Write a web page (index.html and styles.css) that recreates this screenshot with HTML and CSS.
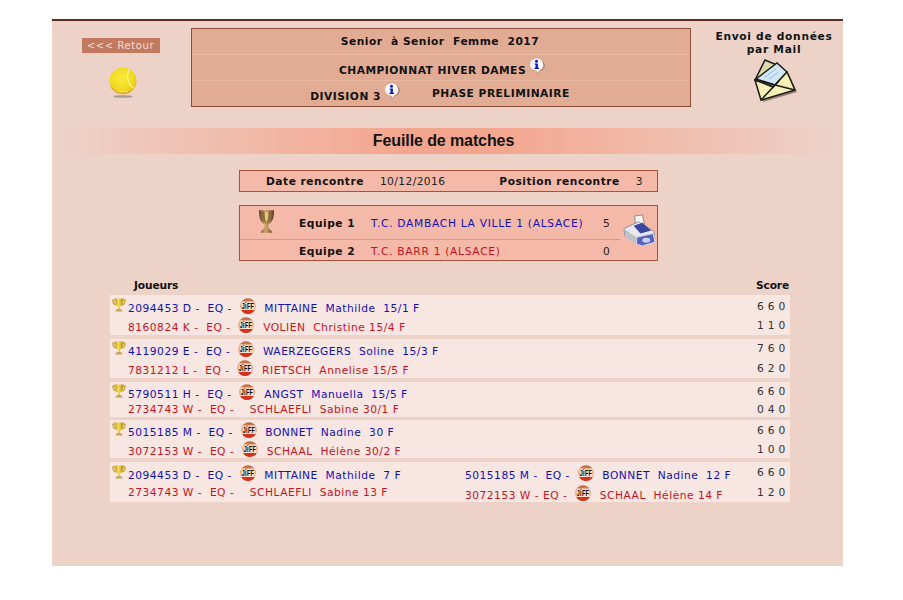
FILE: index.html
```html
<!DOCTYPE html>
<html lang="fr">
<head>
<meta charset="utf-8">
<title>Feuille de matches</title>
<link rel="stylesheet" href="styles.css">
</head>
<body>
<svg class="defs" aria-hidden="true">
  <defs>
    <linearGradient id="gOrange" x1="0" y1="0" x2="0" y2="1"><stop offset="0" stop-color="#b9663c"/><stop offset=".5" stop-color="#ee9d68"/><stop offset="1" stop-color="#f0a070"/></linearGradient>
    <radialGradient id="gBall" cx=".45" cy=".4" r=".65"><stop offset="0" stop-color="#fbe83c"/><stop offset=".7" stop-color="#f0d81c"/><stop offset="1" stop-color="#d2b424"/></radialGradient>
    <linearGradient id="gCup" x1="0" y1="0" x2="1" y2="0"><stop offset="0" stop-color="#5d4020"/><stop offset=".45" stop-color="#d0a868"/><stop offset="1" stop-color="#54391d"/></linearGradient>
    <linearGradient id="gTrophy" x1="0" y1="0" x2="1" y2="0"><stop offset="0" stop-color="#c0981c"/><stop offset=".45" stop-color="#f6dc5c"/><stop offset="1" stop-color="#a98412"/></linearGradient>
    <symbol id="jiff" viewBox="0 0 16 16">
      <circle cx="8" cy="8" r="7.800" fill="url(#gOrange)"/>
      <path d="M1.200 12h13.600A8 8 0 0 1 8 16a8 8 0 0 1-6.800-4z" fill="#d5301c"/>
      <rect x="1.500" y="3.500" width="13" height="8.500" fill="#fbeee0" opacity=".8"/>
      <text x="8" y="11.400" class="jiff-txt" text-anchor="middle" textLength="12.500" lengthAdjust="spacingAndGlyphs">JiFF</text>
    </symbol>
    <symbol id="trophy" viewBox="0 0 16 16">
      <path d="M3 2.500H1c0 3 1.500 5 4 5.500M13 2.500h2c0 3-1.500 5-4 5.500" fill="none" stroke="#c9a32c" stroke-width="1.500"/>
      <path d="M2.800 .5h10.400c0 5-1.500 8-4 9.200v2.800H6.800V9.700C4.300 8.500 2.800 5.500 2.800 .5z" fill="url(#gTrophy)"/>
      <path d="M4 15.500c0-2 1.800-3.300 4-3.300s4 1.300 4 3.300z" fill="#c2a85a"/>
    </symbol>
    <symbol id="info" viewBox="0 0 16 16">
      <path d="M9 1.500a6.500 6 0 0 1 1.500 11.500L8.300 16 7 13.500h3a6.500 6 0 0 0 4-2 6.500 6 0 0 0-5-10z" fill="#8d7d78"/>
      <path d="M7.500 .5a6.500 6 0 1 0 0 12l.9 2.800 2-3.400A6.500 6 0 0 0 7.500 .5z" fill="#fff"/>
      <circle cx="7.500" cy="3.200" r="1.500" fill="#1212c8"/>
      <path d="M5.600 5.400h3.300v4.400h1.100v1.300H5.400V9.800h1.100V6.600h-.9z" fill="#1212c8"/>
    </symbol>
  </defs>
</svg>
<main class="page">
  <header class="header">
    <div class="left">
      <a class="back">&lt;&lt;&lt; Retour</a>
      <svg class="ball" viewBox="0 0 30 34" aria-hidden="true">
        <ellipse cx="15" cy="30.500" rx="10" ry="1.300" fill="#a89a98"/>
        <circle cx="15" cy="15" r="13.500" fill="url(#gBall)"/>
        <path d="M21 3C18 11 20 19 26 22M7 24c4 2 9 3 13 1" fill="none" stroke="#fdf8c0" stroke-width="1"/>
        <path d="M3 21c5 6 13 8 20 4" fill="none" stroke="#e3ac36" stroke-width="1.500"/>
      </svg>
    </div>
    <div class="infobox">
      <div class="ib-row ib-one">Senior&#160; à Senior&#160; Femme&#160; 2017</div>
      <div class="ib-row ib-two"><span>CHAMPIONNAT HIVER DAMES</span><svg class="info"><use href="#info"/></svg></div>
      <div class="ib-row ib-three"><span class="division">DIVISION 3</span><svg class="info"><use href="#info"/></svg><span class="phase">PHASE PRELIMINAIRE</span></div>
    </div>
    <div class="right">
      <p class="mail">Envoi de données<br>par Mail</p>
      <svg class="envelope" viewBox="0 0 46 46" aria-hidden="true">
        <polygon points="5,23 11,43 45,33 37,15 15,3" fill="#4a3a32" opacity=".55"/>
        <polygon points="3,21 13,1 25,6 12,24" fill="#ddd8ae" stroke="#1c1c14" stroke-width="1.500"/>
        <polygon points="4,20 25,4 35,13 23,26" fill="#cfe6f6" stroke="#1c1c14" stroke-width="1.500"/>
        <path d="M13 18l11-8M17 20l10-7" stroke="#7fa3d8" stroke-width="1" stroke-dasharray="2 1"/>
        <polygon points="3,21 9,41 43,31 35,13 21,28" fill="#f8f2b8" stroke="#1c1c14" stroke-width="1.500"/>
        <path d="M3 21l40 10M9 41l18-19" fill="none" stroke="#1c1c14" stroke-width="1.500"/>
      </svg>
    </div>
  </header>

  <h1 class="title">Feuille de matches</h1>

  <section class="datebox">
    <b class="d-label">Date rencontre</b><span class="d-value">10/12/2016</span><b class="d-pos">Position rencontre</b><span class="d-num">3</span>
  </section>

  <section class="teams">
    <div class="t-rows">
      <div class="t-row t-first">
        <svg class="cup" viewBox="0 0 18 26" aria-hidden="true">
          <path d="M1 1h16c0 9-2 13-6 15v3c0 2 4 3 4 6H3c0-3 4-4 4-6v-3C3 14 1 10 1 1z" fill="url(#gCup)"/>
          <path d="M4 3h10c0 7-1.500 10-5 12C5.500 13 4 10 4 3z" fill="#8b6a3a"/>
          <path d="M7 3h4c0 6-.5 9-2 11-1.500-2-2-5-2-11z" fill="#e2c37c"/>
        </svg>
        <b class="t-label">Equipe 1</b><span class="t-name blue">T.C. DAMBACH LA VILLE 1 (ALSACE)</span><span class="t-score">5</span>
      </div>
      <div class="t-row t-second">
        <b class="t-label">Equipe 2</b><span class="t-name red">T.C. BARR 1 (ALSACE)</span><span class="t-score">0</span>
      </div>
    </div>
    <svg class="printer" viewBox="0 0 34 34" aria-hidden="true">
      <polygon points="12,2 20,1 22,10 13,12" fill="#f4f4f4" stroke="#8a8a90"/>
      <polygon points="1,15 16,8 32,18 32,25 15,25 2,23" fill="#e8e8ec" stroke="#8f8f98"/>
      <polygon points="11,12 20,9 29,17 18,20" fill="#3c46a0"/>
      <polygon points="2,16 14,24 14,31 2,24" fill="#bfc1c8"/>
      <polygon points="14,24 31,20 33,29 20,33 14,31" fill="#5a62c0" stroke="#d9dbe8"/>
      <ellipse cx="24" cy="27" rx="4" ry="2.500" fill="#c8d0f0"/>
    </svg>
  </section>

  <div class="heads"><b>Joueurs</b><b>Score</b></div>

  <section class="matches">
    <article class="match m-a">
      <div class="players">
        <div class="line blue"><svg class="trophy"><use href="#trophy"/></svg>2094453 D -&#160; EQ -&#160;&#160; <svg class="jiff"><use href="#jiff"/></svg>&#160; MITTAINE&#160; Mathilde&#160; 15/1 F</div>
        <div class="line red indent">8160824 K -&#160; EQ -&#160;&#160; <svg class="jiff"><use href="#jiff"/></svg>&#160; VOLIEN&#160; Christine 15/4 F</div>
      </div>
      <div class="score"><div class="s-line">6 6 0</div><div class="s-line">1 1 0</div></div>
    </article>
    <article class="match m-b">
      <div class="players">
        <div class="line blue"><svg class="trophy"><use href="#trophy"/></svg>4119029 E -&#160; EQ -&#160;&#160; <svg class="jiff"><use href="#jiff"/></svg>&#160; WAERZEGGERS&#160; Soline&#160; 15/3 F</div>
        <div class="line red indent">7831212 L -&#160; EQ -&#160;&#160; <svg class="jiff"><use href="#jiff"/></svg>&#160; RIETSCH&#160; Annelise 15/5 F</div>
      </div>
      <div class="score"><div class="s-line">7 6 0</div><div class="s-line">6 2 0</div></div>
    </article>
    <article class="match m-c">
      <div class="players">
        <div class="line h17 blue"><svg class="trophy"><use href="#trophy"/></svg>5790511 H -&#160; EQ -&#160;&#160; <svg class="jiff"><use href="#jiff"/></svg>&#160; ANGST&#160; Manuella&#160; 15/5 F</div>
        <div class="line plain red indent">2734743 W -&#160; EQ -&#160;&#160;&#160; SCHLAEFLI&#160; Sabine 30/1 F</div>
      </div>
      <div class="score tight"><div class="s-line">6 6 0</div><div class="s-line">0 4 0</div></div>
    </article>
    <article class="match m-d">
      <div class="players">
        <div class="line blue"><svg class="trophy"><use href="#trophy"/></svg>5015185 M -&#160; EQ -&#160;&#160; <svg class="jiff"><use href="#jiff"/></svg>&#160; BONNET&#160; Nadine&#160; 30 F</div>
        <div class="line red indent">3072153 W -&#160; EQ -&#160;&#160; <svg class="jiff"><use href="#jiff"/></svg>&#160; SCHAAL&#160; Hélène 30/2 F</div>
      </div>
      <div class="score"><div class="s-line">6 6 0</div><div class="s-line">1 0 0</div></div>
    </article>
    <article class="match m-e">
      <div class="players">
        <div class="line blue"><svg class="trophy"><use href="#trophy"/></svg>2094453 D -&#160; EQ -&#160;&#160; <svg class="jiff"><use href="#jiff"/></svg>&#160; MITTAINE&#160; Mathilde&#160; 7 F</div>
        <div class="line plain red indent">2734743 W -&#160; EQ -&#160;&#160;&#160; SCHLAEFLI&#160; Sabine 13 F</div>
      </div>
      <div class="players partners">
        <div class="line h20 blue">5015185 M -&#160; EQ -&#160;&#160; <svg class="jiff"><use href="#jiff"/></svg>&#160; BONNET&#160; Nadine&#160; 12 F</div>
        <div class="line red">3072153 W - EQ -&#160;&#160; <svg class="jiff"><use href="#jiff"/></svg>&#160; SCHAAL&#160; Hélène 14 F</div>
      </div>
      <div class="score"><div class="s-line">6 6 0</div><div class="s-line">1 2 0</div></div>
    </article>
  </section>
</main>
</body>
</html>
```
FILE: styles.css
```css
html, body { margin: 0; padding: 0; background: #fff; }
body {
  padding: 19px 0 0 52px;
  font-family: "DejaVu Sans", Verdana, sans-serif;
  font-size: 10.67px;
  color: #1a1a1a;
}
.defs { display: block; width: 0; height: 0; }
.jiff-txt {
  font: bold 8.500px "Liberation Sans", Arial, sans-serif;
  fill: #000;
}

.page {
  width: 791px;
  height: 545px;
  background: #edd2c8;
  border-top: 2px solid #5a2e20;
}

/* header */
.header { display: flex; padding-top: 7px; height: 79px; }
.left {
  width: 139px;
  display: flex;
  flex-direction: column;
  align-items: center;
  padding-top: 10px;
}
.back {
  width: 78px;
  height: 15px;
  margin-right: 2px;
  line-height: 15px;
  text-align: center;
  background: #c17a60;
  color: #f4dcd0;
  font-size: 10px;
  letter-spacing: .6px;
}
.ball { width: 30px; height: 34px; margin: 13px 0 0 3px; }
.infobox {
  width: 498px;
  height: 77px;
  background: #e2ab93;
  border: 1px solid #8a4f3a;
  font-weight: bold;
  letter-spacing: .5px;
  color: #111;
}
.ib-row {
  display: flex;
  justify-content: center;
  box-sizing: border-box;
  margin-right: 2px;
}
.ib-one { height: 26px; align-items: center; border-bottom: 1px solid #eab9a3; padding-bottom: 1px; }
.ib-two { height: 26px; border-bottom: 1px solid #eab9a3; padding: 9px 0 0 4px; }
.ib-three { height: 25px; padding: 8px 0 0 0; }
.division { margin-top: 1px; }
.phase { margin: -2px 0 0 32px; }
.info { width: 16px; height: 16px; margin: -6px 0 0 3px; }
.right { width: 152px; text-align: center; padding-left: 14px; box-sizing: border-box; }
.mail {
  margin: 2px 0 0;
  font-size: 10.67px;
  font-weight: bold;
  line-height: 13px;
  letter-spacing: .7px;
  color: #111;
}
.envelope { display: block; width: 46px; height: 46px; margin: 3px 0 0 47px; }

/* title */
.title {
  margin: 21px 0 0;
  height: 26px;
  text-align: center;
  font: bold 16px/26px "Liberation Sans", Arial, sans-serif;
  letter-spacing: -.1px;
  color: #111;
  padding-right: 8px;
  background: linear-gradient(90deg, #edd2c8 1%, #f4a58e 45%, #f4a58e 55%, #edd2c8 99%);
}

/* date */
.datebox, .teams {
  width: 417px;
  margin-left: 187px;
  background: #f4b9a8;
  border: 1px solid #a3543c;
}
.datebox {
  display: flex;
  align-items: center;
  height: 20px;
  margin-top: 16px;
  color: #222;
}
.datebox b { color: #111; letter-spacing: .5px; }
.d-label { margin-left: 26px; }
.d-value { margin-left: 16px; letter-spacing: .4px; }
.d-pos { margin-left: 54px; }
.d-num { margin-left: 16px; }

/* teams */
.teams { height: 54px; margin-top: 13px; display: flex; align-items: flex-start; }
.t-rows { width: 380px; flex: none; }
.t-row { display: flex; align-items: center; box-sizing: border-box; }
.t-first { height: 34px; border-bottom: 1px solid #d49a86; padding: 2px 0 0 18px; }
.t-second { height: 20px; padding: 2px 0 0 59px; }
.t-row b { color: #111; letter-spacing: .5px; }
.cup { width: 17px; height: 25px; margin: -4px 24px 0 0; flex: none; }
.t-label { width: 72px; flex: none; }
.t-name { width: 232px; flex: none; letter-spacing: .7px; }
.t-score { color: #222; }
.printer { width: 33px; height: 33px; margin: 8px 0 0 3px; flex: none; }
.blue { color: #1410b4; }
.red { color: #c8141e; }

/* list */
.heads {
  display: flex;
  justify-content: space-between;
  box-sizing: border-box;
  width: 680px;
  height: 34px;
  margin-left: 58px;
  padding: 18px 1px 0 24px;
  color: #111;
  line-height: 13px;
  letter-spacing: -.15px;
}
.matches { width: 680px; margin-left: 58px; }
.match { display: flex; background: #f7e6e1; white-space: nowrap; }
.m-a { height: 40px; margin-bottom: 4px; }
.m-b { height: 39px; margin-bottom: 4px; }
.m-c { height: 35px; margin-bottom: 3px; }
.m-d { height: 38px; margin-bottom: 4px; }
.m-e { height: 40px; }
.players { flex: 1; padding: 2px 0 0 2px; }
.m-a .players { padding-top: 3px; }
.m-e .players { padding-top: 3px; }
.m-e .players:first-child { flex: none; width: 353px; }
.m-e .players.partners { flex: none; width: 292px; padding-left: 0; }
.line { height: 19px; line-height: 16px; letter-spacing: .5px; }
.plain { padding-top: 1px; box-sizing: border-box; }
.h17 { height: 17px; }
.h20 { height: 20px; }
.indent { padding-left: 16px; }
.trophy { width: 14px; height: 14px; margin: 0 2px -1px 0; vertical-align: 1px; }
.jiff { width: 16px; height: 16px; vertical-align: 3px; margin: 0 1px -5px -4px; }
.score { width: 33px; flex: none; padding-top: 4px; color: #333; letter-spacing: .3px; }
.m-b .score, .m-c .score { padding-top: 2px; }
.m-d .score, .m-e .score { padding-top: 3px; }
.s-line { height: 19px; line-height: 16px; }
.m-b .s-line, .m-e .s-line { height: 20px; }
.tight .s-line { height: 18px; }
```
